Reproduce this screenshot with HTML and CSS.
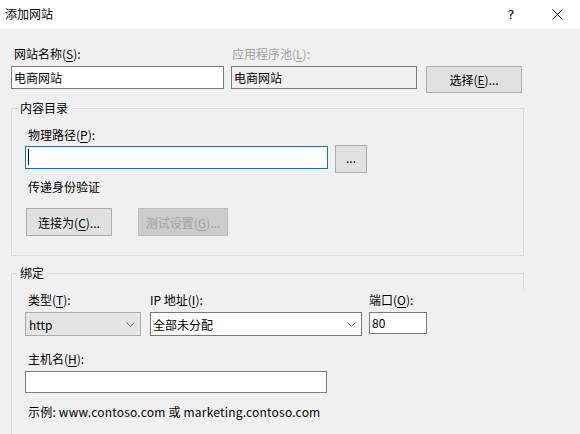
FILE: index.html
```html
<!DOCTYPE html>
<html lang="zh-CN">
<head>
<meta charset="utf-8">
<title>添加网站</title>
<link rel="stylesheet" href="styles.css">
</head>
<body>
<div class="titlebar">
  <span class="title">添加网站</span>
  <div class="caption">
    <span class="cap-btn help">?</span>
    <span class="cap-btn">
      <svg width="11" height="11" viewBox="0 0 11 11"><path d="M0.5 0.5 L10.5 10.5 M10.5 0.5 L0.5 10.5" stroke="#000" stroke-width="1" fill="none"/></svg>
    </span>
  </div>
</div>
<div class="main">
  <div class="row1">
    <div class="field f-name">
      <div class="label l-indent">网站名称(<u>S</u>):</div>
      <div class="input">电商网站</div>
    </div>
    <div class="field f-pool">
      <div class="label disabled l-pool">应用程序池(<u>L</u>):</div>
      <div class="input readonly">电商网站</div>
    </div>
    <div class="btn btn-select">选择(<u>E</u>)...</div>
  </div>

  <fieldset class="group g1">
    <legend class="legend">内容目录</legend>
    <div class="label l-indent3">物理路径(<u>P</u>):</div>
    <div class="path-row">
      <div class="input focus path"><span class="caret"></span></div>
      <div class="btn btn-browse">...</div>
    </div>
    <div class="label l-indent3 auth">传递身份验证</div>
    <div class="btn-row">
      <div class="btn btn-connect">连接为(<u>C</u>)...</div>
      <div class="btn btn-disabled btn-test">测试设置(<u>G</u>)...</div>
    </div>
  </fieldset>

  <fieldset class="group g2">
    <legend class="legend">绑定</legend>
    <div class="bind-row">
      <div class="field f-type">
        <div class="label l-indent3">类型(<u>T</u>):</div>
        <div class="select gray"><span>http</span>
          <svg width="9" height="5" viewBox="0 0 9 5"><path d="M0.5 0.5 L4.5 4.5 L8.5 0.5" stroke="#6d6d6d" fill="none"/></svg>
        </div>
      </div>
      <div class="field f-ip">
        <div class="label">IP 地址(<u>I</u>):</div>
        <div class="select"><span>全部未分配</span>
          <svg width="9" height="5" viewBox="0 0 9 5"><path d="M0.5 0.5 L4.5 4.5 L8.5 0.5" stroke="#6d6d6d" fill="none"/></svg>
        </div>
      </div>
      <div class="field f-port">
        <div class="label">端口(<u>O</u>):</div>
        <div class="input port">80</div>
      </div>
    </div>
    <div class="label l-indent3 host-label">主机名(<u>H</u>):</div>
    <div class="input host"></div>
    <div class="label l-indent3 example">示例: www.contoso.com 或 marketing.contoso.com</div>
  </fieldset>
</div>
</body>
</html>
```
FILE: styles.css
```css
html, body {
  margin: 0;
  padding: 0;
  width: 580px;
  height: 434px;
  overflow: hidden;
  background: #f0f0f0;
  font-family: "Noto Sans CJK SC", "Noto Sans", sans-serif;
  font-size: 12px;
  color: #000;
}
u { text-underline-offset: 2px; }

.titlebar {
  height: 29px;
  background: #fff;
  display: flex;
  align-items: center;
}
.title {
  padding-left: 5px;
  line-height: 16px;
  margin-top: -1px;
}
.caption {
  margin-left: auto;
  display: flex;
  height: 29px;
}
.cap-btn {
  width: 46px;
  height: 29px;
  display: flex;
  align-items: center;
  justify-content: center;
}
.cap-btn.help {
  font-family: "DejaVu Sans", sans-serif;
  font-size: 13px;
}

.main {
  padding: 17px 0 0 11px;
}
.label {
  line-height: 16px;
  white-space: nowrap;
}
.disabled { color: #a0a0a0; }
.l-indent { margin-left: 3px; }
.l-pool { margin-left: 1px; }
.l-indent3 { margin-left: 3px; }

.row1 {
  display: flex;
  align-items: flex-start;
  height: 47px;
}
.field { display: flex; flex-direction: column; }
.field .label { margin-bottom: 4px; }
.f-name { width: 213px; }
.f-pool { width: 186px; margin-left: 7px; }

.input {
  box-sizing: border-box;
  height: 23px;
  border: 1px solid #7a7a7a;
  background: #fff;
  padding-left: 2px;
  line-height: 21px;
  white-space: nowrap;
}
.input.readonly { background: #f0f0f0; }
.input.focus { border-color: #0078d7; }

.btn {
  box-sizing: border-box;
  border: 1px solid #adadad;
  background: #e1e1e1;
  display: flex;
  align-items: center;
  justify-content: center;
  white-space: nowrap;
}
.btn-select { width: 96px; height: 27px; margin-left: 9px; margin-top: 20px; }

.group {
  box-sizing: border-box;
  width: 513px;
  margin: 0;
  padding: 11px 0 19px 13px;
  border: 1px solid #dcdcdc;
  min-inline-size: 0;
}
.g1 { margin-top: 7px; }
.legend {
  line-height: 16px;
  padding: 0 3px;
  margin-left: -8px;
}

.path-row {
  display: flex;
  align-items: flex-start;
  margin-top: 3px;
  height: 27px;
}
.path { width: 303px; position: relative; }
.caret {
  position: absolute;
  left: 2px;
  top: 2px;
  width: 1px;
  height: 16px;
  background: #000;
}
.btn-browse { width: 32px; height: 28px; margin-left: 7px; margin-top: -1px; padding-bottom: 4px; }
.auth { margin-top: 6px; }
.btn-row { display: flex; margin-top: 13px; }
.btn-connect { width: 86px; height: 28px; margin-left: 1px; }
.btn-test { width: 90px; height: 28px; margin-left: 26px; }
.btn-disabled { background: #cccccc; border-color: #bfbfbf; color: #a3a3a3; }

.g2 {
  margin-top: 9px;
  border-right: 0;
  padding-bottom: 40px;
  position: relative;
}
.g2::after {
  content: "";
  position: absolute;
  right: 0;
  top: -9px;
  width: 1px;
  height: 17px;
  background: #dcdcdc;
}
.bind-row { display: flex; align-items: flex-start; }
.f-type { width: 116px; }
.f-ip { width: 212px; margin-left: 9px; }
.f-port { width: 58px; margin-left: 7px; }
.select {
  box-sizing: border-box;
  height: 24px;
  border: 1px solid #7a7a7a;
  background: #fff;
  display: flex;
  align-items: center;
  padding: 0 5px 0 2px;
  white-space: nowrap;
}
.select span { flex: 1; }
.select.gray { background: #e5e5e5; border-color: #acacac; padding-left: 3px; }
.port { height: 22px; line-height: 20px; }
.host-label { margin-top: 15px; }
.host { width: 302px; height: 22px; margin-top: 4px; }
.example { margin-top: 11px; letter-spacing: 0.2px; }
```
